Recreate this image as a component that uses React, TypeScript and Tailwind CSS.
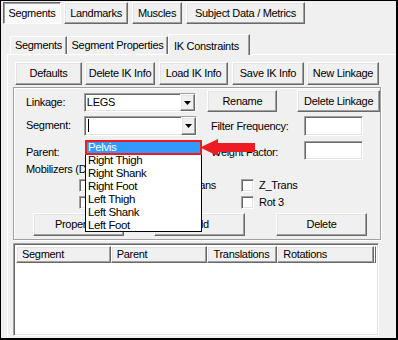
import React from 'react';

const raised =
  'bg-[#f0f0f0] border border-t-white border-l-white border-r-[#696969] border-b-[#696969] shadow-[inset_-1px_-1px_0_#a0a0a0,inset_1px_1px_0_#e3e3e3]';
const sunken =
  'bg-white border border-t-[#a0a0a0] border-l-[#a0a0a0] border-r-white border-b-white shadow-[inset_1px_1px_0_#696969,inset_-1px_-1px_0_#e3e3e3]';

const Btn = ({ label, className }: { label: string; className: string }) => (
  <div className={`${raised} ${className} flex items-center justify-center whitespace-nowrap`}>{label}</div>
);

const DropBtn = () => (
  <div className={`${raised} w-[15px] h-full flex items-center justify-center`}>
    <svg width="7" height="4" viewBox="0 0 7 4">
      <polygon points="0,0 7,0 3.5,4" fill="#000" />
    </svg>
  </div>
);

const Check = ({ className = '' }: { className?: string }) => (
  <div className={`${sunken} w-[13px] h-[13px] shrink-0 ${className}`} />
);

export default function App() {
  const items = ['Pelvis', 'Right Thigh', 'Right Shank', 'Right Foot', 'Left Thigh', 'Left Shank', 'Left Foot'];

  return (
    <div
      className="relative w-[398px] h-[340px] overflow-hidden bg-[#f0f0f0] border-l border-t border-r-2 border-b-2 border-black text-[11px] tracking-[-0.3px] text-black"
      style={{ fontFamily: '"Liberation Sans", Arial, sans-serif' }}
    >
      {/* top tabs (button style) */}
      <div className="flex gap-[3px] pl-[2px] pt-[1px] h-[23px]">
        <div className="w-[58px] h-[22px] flex items-center justify-center bg-[#f8f8f8] border border-t-[#696969] border-l-[#696969] border-r-white border-b-white shadow-[inset_1px_1px_0_#a0a0a0]">
          Segments
        </div>
        <Btn label="Landmarks" className="w-[64px] h-[22px]" />
        <Btn label="Muscles" className="w-[50px] h-[22px] ml-[1px]" />
        <Btn label="Subject Data / Metrics" className="w-[119px] h-[22px] ml-[1px]" />
      </div>

      {/* inner tab strip */}
      <div className="flex items-end h-[30px] pl-[9px]">
        <div className="w-[57px] h-[18px] border border-b-0 border-t-white border-l-white border-r-[#696969] shadow-[inset_-1px_0_0_#a0a0a0] flex items-center justify-center">
          Segments
        </div>
        <div className="w-[101px] h-[18px] border border-b-0 border-t-white border-l-white border-r-[#696969] shadow-[inset_-1px_0_0_#a0a0a0] flex items-center justify-center">
          Segment Properties
        </div>
        <div className="relative z-10 w-[82px] h-[21px] -mb-[1px] bg-[#f0f0f0] border border-b-0 border-t-white border-l-white border-r-[#696969] shadow-[inset_-1px_0_0_#a0a0a0] flex items-start pt-[3px] pl-[5px]">
          IK Constraints
        </div>
      </div>

      {/* tab page */}
      <div className="ml-[6px] w-[400px] h-[300px] border border-t-white border-l-white border-r-[#696969] border-b-[#696969] pl-[5px] pt-[7px]">
        <div className="flex ml-[2px] h-[23px]">
          <Btn label="Defaults" className="w-[67px] h-[23px]" />
          <Btn label="Delete IK Info" className="w-[70px] h-[23px] ml-[3px]" />
          <Btn label="Load IK Info" className="w-[69px] h-[23px] ml-[4px]" />
          <Btn label="Save IK Info" className="w-[72px] h-[23px] ml-[4px]" />
          <Btn label="New Linkage" className="w-[72px] h-[23px] ml-[3px]" />
        </div>

        {/* group box */}
        <div className="relative mt-[2px] w-[368px] h-[153px] border border-[#a0a0a0] shadow-[inset_1px_1px_0_white,1px_1px_0_white] pt-[2px]">
          <div className="flex items-end h-[22px]">
            <span className="w-[70px] pl-[12px] self-center pt-[3px]">Linkage:</span>
            <div className={`${sunken} w-[113px] h-[19px] flex items-center`}>
              <span className="flex-1 pl-[2px]">LEGS</span>
              <DropBtn />
            </div>
            <Btn label="Rename" className="w-[70px] h-[22px] ml-[11px]" />
            <Btn label="Delete Linkage" className="w-[83px] h-[22px] ml-[20px]" />
          </div>

          <div className="flex items-center h-[21px] mt-[3px]">
            <span className="w-[70px] pl-[12px]">Segment:</span>
            <div className={`${sunken} w-[113px] h-[20px] flex items-center`}>
              <span className="flex-1 pl-[3px] flex items-center">
                <span className="w-px h-[13px] bg-black" />
              </span>
              <DropBtn />
            </div>
            <span className="ml-[14px] w-[93px] pt-[1px]">Filter Frequency:</span>
            <div className={`${sunken} w-[59px] h-[20px]`} />
          </div>

          <div className="flex items-center h-[20px] mt-[4px]">
            <span className="w-[70px] pl-[12px] pt-[4px]">Parent:</span>
            <span className="w-[113px]" />
            <span className="ml-[14px] w-[93px] pt-[5px]">Weight Factor:</span>
            <div className={`${sunken} w-[59px] h-[19px]`} />
          </div>

          <div className="h-[14px] mt-[2px] pl-[12px] flex items-center">Mobilizers (DOF):</div>

          <div className="flex items-center h-[13px] mt-[3px]">
            <Check className="ml-[65px]" />
            <span className="w-[68px]" />
            <Check />
            <span className="ml-[4px] w-[64px]">Y_Trans</span>
            <Check />
            <span className="ml-[5px]">Z_Trans</span>
          </div>
          <div className="flex items-center h-[13px] mt-[4px]">
            <Check className="ml-[65px]" />
            <span className="w-[68px]" />
            <Check />
            <span className="w-[68px]" />
            <Check />
            <span className="ml-[5px]">Rot 3</span>
          </div>

          <div className="flex h-[23px] mt-[4px]">
            <Btn label="Properties" className="w-[91px] h-[23px] ml-[19px]" />
            <Btn label="Add" className="w-[91px] h-[23px] ml-[30px]" />
            <Btn label="Delete" className="w-[91px] h-[23px] ml-[31px]" />
          </div>
        </div>

        {/* list view */}
        <div className={`${sunken} mt-[3px] w-[366px] h-[93px] p-[2px]`}>
          <div className="flex h-[17px]">
            <div className={`${raised} w-[95px] h-full flex items-center pl-[5px]`}>Segment</div>
            <div className={`${raised} w-[97px] h-full flex items-center pl-[5px]`}>Parent</div>
            <div className={`${raised} w-[70px] h-full flex items-center pl-[5px]`}>Translations</div>
            <div className={`${raised} w-[97px] h-full flex items-center pl-[5px]`}>Rotations</div>
            <div className={`${raised} flex-1 h-full`} />
          </div>
        </div>
      </div>

      {/* open dropdown list */}
      <div className="absolute left-[84px] top-[139px] w-[117px] h-[92px] bg-white border border-black">
        {items.map((it, i) => (
          <div
            key={it}
            className={`h-[13px] leading-[13px] pl-[2px] text-[11.5px] tracking-[-0.4px] ${i === 0 ? 'bg-[#3399ff] text-white' : ''}`}
          >
            {it}
          </div>
        ))}
      </div>
      <div className="absolute left-[84px] top-[139px] w-[117px] h-[15px] border-2 border-[#ed1c24]" />

      {/* red arrow */}
      <svg className="absolute left-[199px] top-[137px]" width="55" height="19" viewBox="0 0 55 19">
        <polygon points="0,9.5 18,1 18,5 55,5 55,14 18,14 18,18" fill="#ed1c24" />
      </svg>
    </div>
  );
}
